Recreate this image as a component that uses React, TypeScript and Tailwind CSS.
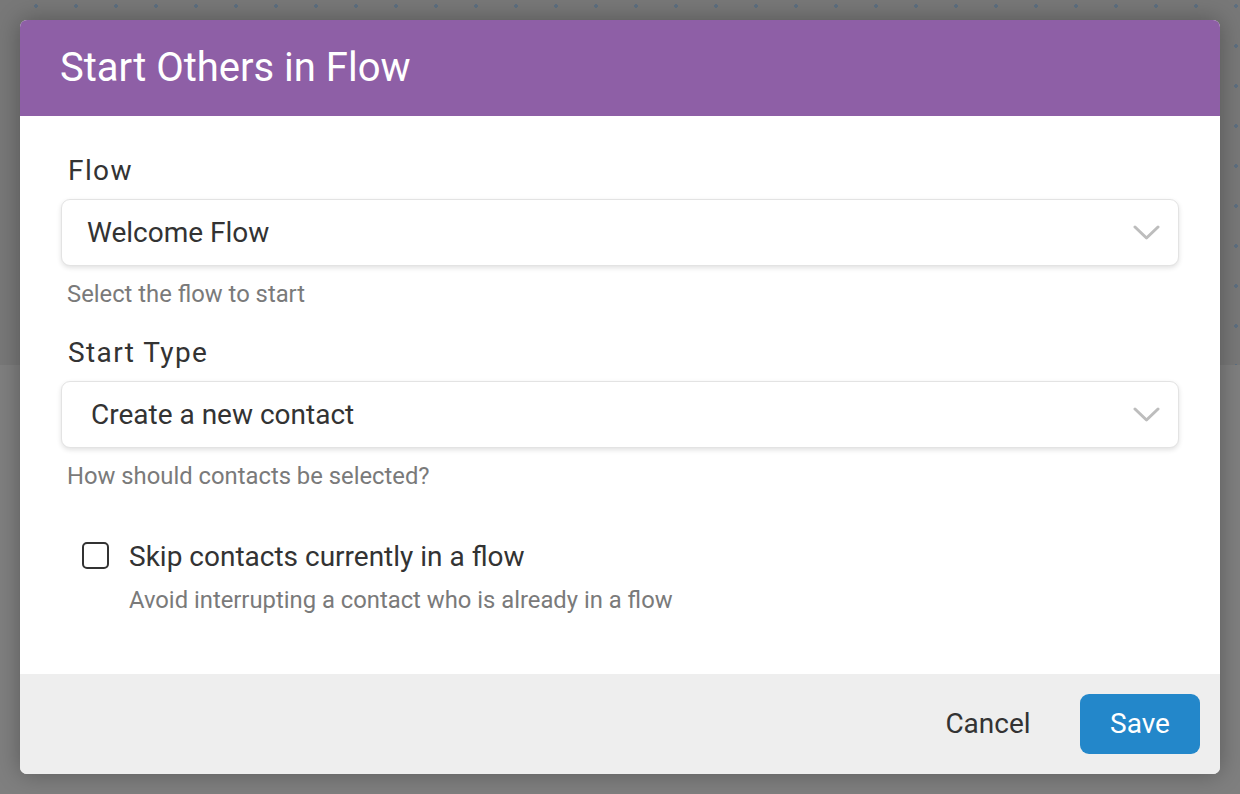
function Chevron() {
  return (
    <svg width="27" height="18" viewBox="0 0 27 18" className="mr-[18px]">
      <polyline points="2,3 13.5,14 25,3" fill="none" stroke="#bdbdbd" strokeWidth="3" strokeLinecap="round" strokeLinejoin="round" />
    </svg>
  );
}

function SelectBox({ value, inset }: { value: string; inset: string }) {
  return (
    <div className="flex h-[67px] items-center justify-between rounded-[9px] border border-[#e3e3e3] bg-white shadow-[0_2px_5px_rgba(0,0,0,0.12)]">
      <span className={`${inset} text-[28px] leading-[32px] text-[#333333]`}>{value}</span>
      <Chevron />
    </div>
  );
}

export default function App() {
  return (
    <div className="relative h-[794px] w-[1240px] overflow-hidden font-['Roboto',sans-serif]">
      <div className="flex h-full flex-col">
        <div className="h-[365px] bg-[#787878] bg-[radial-gradient(circle,#5d6f80_1.6px,transparent_2px)] bg-[length:40px_40px] bg-[position:16px_-14px]" />
        <div className="flex-1 bg-[#7f7f7f]" />
      </div>

      <div className="absolute left-[20px] top-[20px] flex h-[754px] w-[1200px] flex-col overflow-hidden rounded-[7px] bg-white shadow-[0_0_24px_rgba(0,0,0,0.3)]">
        <div className="flex h-[96px] shrink-0 items-center bg-[#8e5fa6] px-[40px]">
          <h1 className="text-[40px] font-normal leading-[46px] text-white">Start Others in Flow</h1>
        </div>

        <div className="flex flex-1 flex-col px-[41px] pt-[39px]">
          <label className="pl-[7px] text-[28px] leading-[32px] tracking-[1.4px] text-[#333333]">Flow</label>
          <div className="mt-[12px]">
            <SelectBox value="Welcome Flow" inset="ml-[25px]" />
          </div>
          <p className="mt-[14px] pl-[6px] text-[23.8px] leading-[28px] text-[#7a7a7a]">Select the flow to start</p>

          <label className="mt-[29px] pl-[7px] text-[28px] leading-[32px] tracking-[1.4px] text-[#333333]">Start Type</label>
          <div className="mt-[12px]">
            <SelectBox value="Create a new contact" inset="ml-[29px]" />
          </div>
          <p className="mt-[14px] pl-[6px] text-[23.8px] leading-[28px] text-[#7a7a7a]">How should contacts be selected?</p>

          <div className="mt-[52px] flex items-start gap-[20px] pl-[21px]">
            <div className="h-[27px] w-[27px] shrink-0 rounded-[5px] border-[2.5px] border-[#333333] bg-white" />
            <div className="flex flex-col">
              <span className="text-[28px] leading-[30px] text-[#333333]">Skip contacts currently in a flow</span>
              <span className="mt-[14px] text-[23.8px] leading-[28px] text-[#7a7a7a]">Avoid interrupting a contact who is already in a flow</span>
            </div>
          </div>
        </div>

        <div className="flex h-[100px] shrink-0 items-center justify-end bg-[#eeeeee] pr-[20px]">
          <button className="mr-[32px] h-[60px] w-[120px] text-[28px] text-[#333333]">Cancel</button>
          <button className="h-[60px] w-[120px] rounded-[9px] bg-[#2387ca] text-[28px] text-white">Save</button>
        </div>
      </div>
    </div>
  );
}
